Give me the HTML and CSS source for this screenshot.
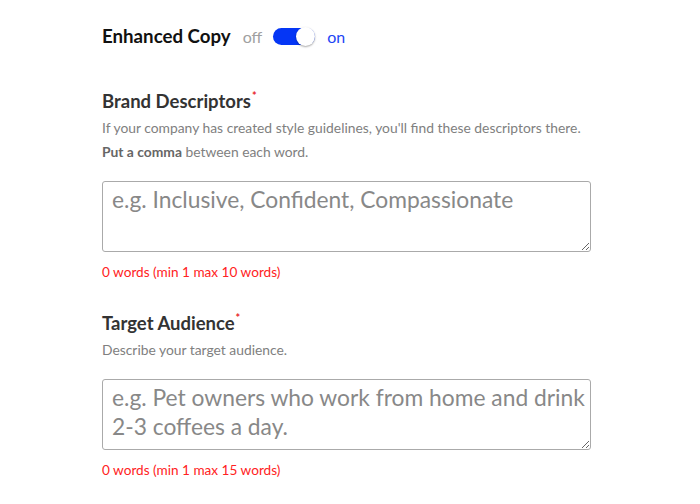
FILE: index.html
```html
<!DOCTYPE html>
<html>
<head>
<meta charset="utf-8">
<link rel="stylesheet" href="styles.css">
</head>
<body>
<div class="page">
  <div class="toggle-row">
    <span class="toggle-title">Enhanced Copy</span>
    <span class="toggle-off">off</span>
    <span class="switch"><span class="knob"></span></span>
    <span class="toggle-on">on</span>
  </div>

  <section class="field first">
    <h2 class="label">Brand Descriptors<span class="req">*</span></h2>
    <p class="help">If your company has created style guidelines, you'll find these descriptors there.</p>
    <p class="help"><b>Put a comma</b> between each word.</p>
    <textarea class="input" placeholder="e.g. Inclusive, Confident, Compassionate"></textarea>
    <div class="count">0 words (min 1 max 10 words)</div>
  </section>

  <section class="field">
    <h2 class="label">Target Audience<span class="req">*</span></h2>
    <p class="help">Describe your target audience.</p>
    <textarea class="input" placeholder="e.g. Pet owners who work from home and drink 2-3 coffees a day."></textarea>
    <div class="count">0 words (min 1 max 15 words)</div>
  </section>
</div>
</body>
</html>
```
FILE: styles.css
```css
* { box-sizing: border-box; }
html, body { margin: 0; padding: 0; background: #fff; }
body { font-family: Lato, "Noto Sans", sans-serif; color: #333; }
.page { padding: 23px 0 0 102px; width: 700px; }

.toggle-row { display: flex; align-items: center; height: 26px; }
.toggle-title { font-size: 18.7px; font-weight: 700; color: #111; margin-right: 12px; }
.toggle-off { font-size: 16px; color: #a0a0a0; margin-right: 11px; }
.toggle-on { font-size: 16px; color: #1d45f5; margin-left: 12px; }
.switch { position: relative; width: 42px; height: 17px; border-radius: 9px; background: #0536f5; }
.knob { position: absolute; right: 0; top: -1px; width: 19px; height: 19px; border-radius: 50%; background: #fff; box-shadow: 0 1px 2px rgba(0,0,0,.35); }

.field { display: flex; flex-direction: column; align-items: flex-start; }
.field.first { margin-top: 40px; }
.field + .field { margin-top: 29px; }
.label { margin: 0 0 3px; font-size: 18.5px; line-height: 24px; font-weight: 700; color: #333; }
.req { color: #e8262b; font-size: 11px; vertical-align: top; position: relative; top: -5px; margin-left: 1px; }
.help { margin: 0; font-size: 13.85px; line-height: 24px; color: #808080; }
.help b { color: #666; font-weight: 700; }
.input { display: block; margin-top: 17px; width: 489px; height: 71px; padding: 3px 1px 4px 9px; border: 1px solid #aaa; border-radius: 3px; font-family: inherit; font-size: 22.8px; line-height: 28.8px; color: #333; resize: vertical; outline: none; }
.input::placeholder { color: #888; }
.count { margin-top: 10px; font-size: 13.6px; line-height: 20px; color: #f22; }
```
